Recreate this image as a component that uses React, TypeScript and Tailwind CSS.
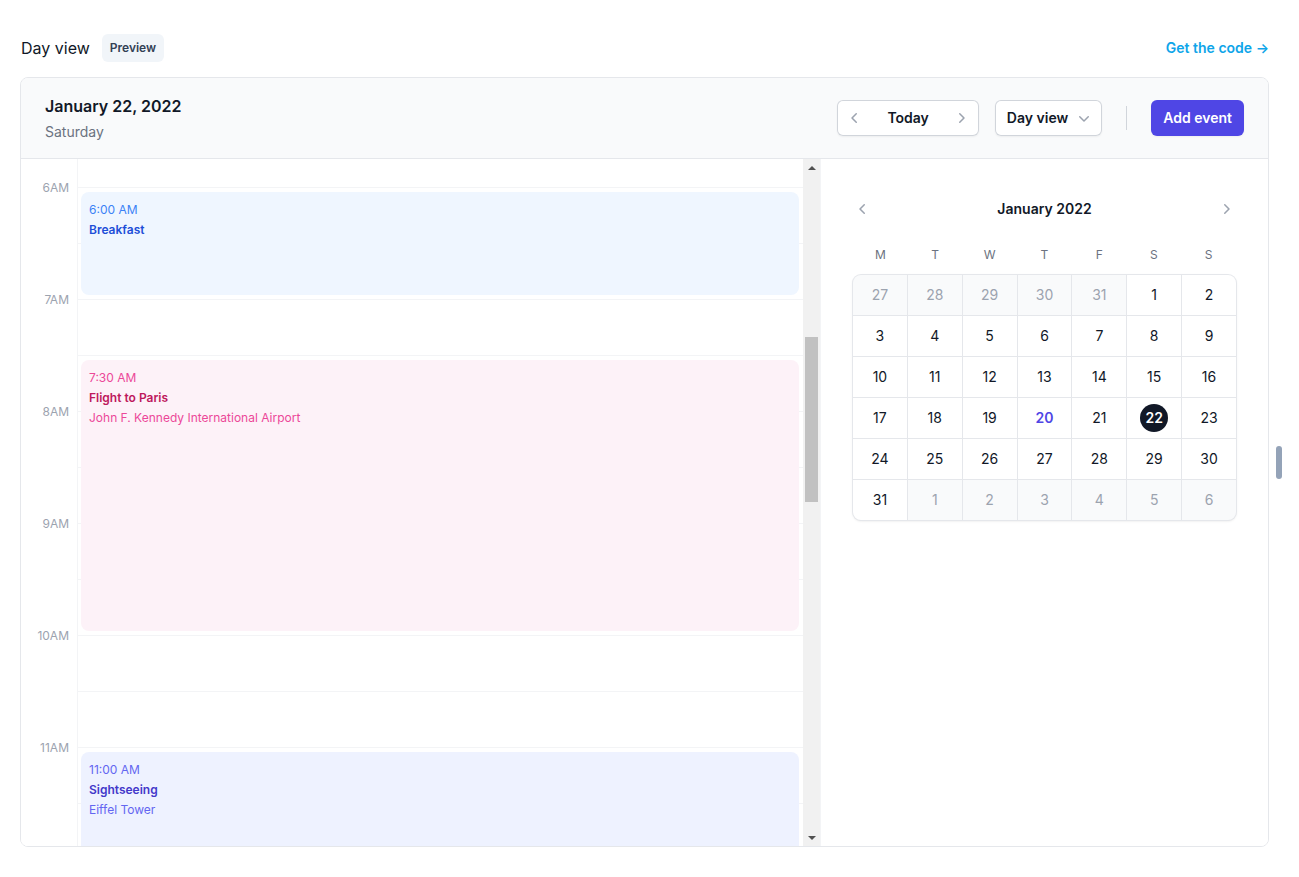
import { useLayoutEffect, useRef } from "react";

const ChevronLeft = ({ className }: { className?: string }) => (
  <svg viewBox="0 0 20 20" fill="currentColor" aria-hidden="true" className={className}>
    <path
      fillRule="evenodd"
      clipRule="evenodd"
      d="M11.78 5.22a.75.75 0 0 1 0 1.06L8.06 10l3.72 3.72a.75.75 0 1 1-1.06 1.06l-4.25-4.25a.75.75 0 0 1 0-1.06l4.25-4.25a.75.75 0 0 1 1.06 0Z"
    />
  </svg>
);

const ChevronRight = ({ className }: { className?: string }) => (
  <svg viewBox="0 0 20 20" fill="currentColor" aria-hidden="true" className={className}>
    <path
      fillRule="evenodd"
      clipRule="evenodd"
      d="M8.22 5.22a.75.75 0 0 1 1.06 0l4.25 4.25a.75.75 0 0 1 0 1.06l-4.25 4.25a.75.75 0 0 1-1.06-1.06L11.94 10 8.22 6.28a.75.75 0 0 1 0-1.06Z"
    />
  </svg>
);

const ChevronDown = ({ className }: { className?: string }) => (
  <svg viewBox="0 0 20 20" fill="currentColor" aria-hidden="true" className={className}>
    <path
      fillRule="evenodd"
      clipRule="evenodd"
      d="M5.22 8.22a.75.75 0 0 1 1.06 0L10 11.94l3.72-3.72a.75.75 0 1 1 1.06 1.06l-4.25 4.25a.75.75 0 0 1-1.06 0L5.22 9.28a.75.75 0 0 1 0-1.06Z"
    />
  </svg>
);

const hours = [
  "12AM", "1AM", "2AM", "3AM", "4AM", "5AM", "6AM", "7AM", "8AM", "9AM", "10AM", "11AM",
  "12PM", "1PM", "2PM", "3PM", "4PM", "5PM", "6PM", "7PM", "8PM", "9PM", "10PM", "11PM",
];

const events = [
  {
    name: "Breakfast",
    time: "6:00 AM",
    place: "",
    row: "row-[74/span_12]",
    box: "bg-[#eff6ff]",
    title: "text-[#1d4ed8]",
    sub: "text-[#3b82f6]",
  },
  {
    name: "Flight to Paris",
    time: "7:30 AM",
    place: "John F. Kennedy International Airport",
    row: "row-[92/span_30]",
    box: "bg-[#fdf2f8]",
    title: "text-[#be185d]",
    sub: "text-[#ec4899]",
  },
  {
    name: "Sightseeing",
    time: "11:00 AM",
    place: "Eiffel Tower",
    row: "row-[134/span_18]",
    box: "bg-[#eef2ff]",
    title: "text-[#4338ca]",
    sub: "text-[#6366f1]",
  },
];

type Day = { n: number; current?: boolean; today?: boolean; selected?: boolean };

const days: Day[] = [
  ...[27, 28, 29, 30, 31].map((n) => ({ n })),
  ...Array.from({ length: 31 }, (_, i) => ({
    n: i + 1,
    current: true,
    today: i + 1 === 20,
    selected: i + 1 === 22,
  })),
  ...[1, 2, 3, 4, 5, 6].map((n) => ({ n })),
];

function MiniCalendar() {
  return (
    <div>
      <div className="flex items-center text-center text-[#111827]">
        <button type="button" className="-m-1.5 flex flex-none items-center justify-center p-1.5 text-[#9ca3af]">
          <ChevronLeft className="size-5" />
        </button>
        <div className="flex-auto text-sm font-semibold">January 2022</div>
        <button type="button" className="-m-1.5 flex flex-none items-center justify-center p-1.5 text-[#9ca3af]">
          <ChevronRight className="size-5" />
        </button>
      </div>
      <div className="mt-6 grid grid-cols-7 text-center text-xs leading-6 text-[#6b7280]">
        <div>M</div>
        <div>T</div>
        <div>W</div>
        <div>T</div>
        <div>F</div>
        <div>S</div>
        <div>S</div>
      </div>
      <div className="isolate mt-2 grid grid-cols-7 gap-px rounded-lg bg-[#e5e7eb] text-sm shadow-sm ring-1 ring-[#e5e7eb]">
        {days.map((day, i) => (
          <button
            key={i}
            type="button"
            className={[
              "py-1.5",
              day.current ? "bg-white" : "bg-[#f9fafb]",
              day.selected || day.today ? "font-semibold" : "",
              day.selected ? "text-white" : "",
              !day.selected && day.today ? "text-[#4f46e5]" : "",
              !day.selected && !day.today && day.current ? "text-[#111827]" : "",
              !day.selected && !day.today && !day.current ? "text-[#9ca3af]" : "",
              i === 0 ? "rounded-tl-lg" : "",
              i === 6 ? "rounded-tr-lg" : "",
              i === days.length - 7 ? "rounded-bl-lg" : "",
              i === days.length - 1 ? "rounded-br-lg" : "",
            ].join(" ")}
          >
            <span
              className={
                "mx-auto flex size-7 items-center justify-center rounded-full " +
                (day.selected ? "bg-[#111827]" : "")
              }
            >
              {day.n}
            </span>
          </button>
        ))}
      </div>
    </div>
  );
}

// grey scrollbar of the preview frame, drawn since the page hides native ones
function ScrollTrack() {
  return (
    <div className="flex w-[17px] flex-none flex-col bg-[#f1f1f1]">
      <div className="flex h-[17px] items-center justify-center">
        <svg width="8" height="4" viewBox="0 0 8 4" className="text-[#505050]">
          <polygon points="0,4 4,0 8,4" fill="currentColor" />
        </svg>
      </div>
      <div className="mx-[2px] mt-[161px] h-[165px] bg-[#c1c1c1]" />
      <div className="mt-auto flex h-[17px] items-center justify-center">
        <svg width="8" height="4" viewBox="0 0 8 4" className="text-[#505050]">
          <polygon points="0,0 8,0 4,4" fill="currentColor" />
        </svg>
      </div>
    </div>
  );
}

export default function App() {
  const container = useRef<HTMLDivElement>(null);

  // start the day at 6AM, like the preview does
  useLayoutEffect(() => {
    if (container.current) container.current.scrollTop = 672;
  }, []);

  return (
    <div className="min-h-screen bg-white pl-5 pt-[34px] font-['Inter',sans-serif]">
      <div className="flex w-[1249px] items-center justify-between">
        <div className="flex items-center gap-3">
          <h2 className="pl-px text-base text-[#111827]">Day view</h2>
          <span className="flex h-7 items-center rounded-md bg-[#f1f5f9] px-2 text-xs font-semibold text-[#334155]">
            Preview
          </span>
        </div>
        <a href="#" className="text-sm font-semibold text-[#0ea5e9]">
          Get the code <span aria-hidden="true">→</span>
        </a>
      </div>

      <div className="mt-[15px] flex">
        <div className="flex h-[770px] w-[1249px] flex-none flex-col overflow-hidden rounded-lg border border-[#e5e7eb]">
          {/* Header */}
          <header className="flex flex-none items-center justify-between border-b border-[#e5e7eb] bg-[#f9fafb] px-6 py-4">
            <div>
              <h1 className="text-base font-semibold text-[#111827]">January 22, 2022</h1>
              <p className="mt-1 text-sm text-[#6b7280]">Saturday</p>
            </div>
            <div className="flex items-center">
              <div className="flex h-9 items-stretch rounded-md bg-white shadow-xs ring-1 ring-[#d1d5db] ring-inset">
                <button type="button" className="flex w-9 items-center justify-center text-[#9ca3af]">
                  <ChevronLeft className="size-5" />
                </button>
                <button type="button" className="px-3.5 text-sm font-semibold text-[#111827]">
                  Today
                </button>
                <button type="button" className="flex w-9 items-center justify-center text-[#9ca3af]">
                  <ChevronRight className="size-5" />
                </button>
              </div>
              <button
                type="button"
                className="ml-4 flex items-center gap-x-1.5 rounded-md bg-white px-3 py-2 text-sm font-semibold text-[#111827] shadow-xs ring-1 ring-[#d1d5db] ring-inset"
              >
                Day view
                <ChevronDown className="-mr-1 size-5 text-[#9ca3af]" />
              </button>
              <div className="ml-6 h-6 w-px bg-[#d1d5db]" />
              <button
                type="button"
                className="ml-6 rounded-md bg-[#4f46e5] px-3 py-2 text-sm font-semibold text-white shadow-xs"
              >
                Add event
              </button>
            </div>
          </header>

          {/* Body */}
          <div className="isolate flex min-h-0 flex-auto overflow-hidden bg-white">
            <div
              ref={container}
              className="flex flex-auto flex-col overflow-y-auto [scrollbar-width:none] [&::-webkit-scrollbar]:hidden"
            >
              <div className="flex w-full flex-auto">
                <div className="w-14 flex-none bg-white ring-1 ring-[#f3f4f6]" />
                <div className="grid flex-auto grid-cols-1 grid-rows-1">
                  {/* Horizontal lines */}
                  <div className="col-start-1 col-end-2 row-start-1 grid grid-rows-[repeat(48,minmax(3.5rem,1fr))]">
                    <div className="row-end-1 h-7" />
                    {hours.map((h) => (
                      <div key={h} className="contents">
                        <div className="border-t border-[#f3f4f6]">
                          <div className="-mt-2.5 -ml-14 w-14 pr-2 text-right text-xs leading-5 text-[#9ca3af]">
                            {h}
                          </div>
                        </div>
                        <div className="border-t border-[#f3f4f6]" />
                      </div>
                    ))}
                  </div>

                  {/* Events */}
                  <ol className="col-start-1 col-end-2 row-start-1 grid grid-cols-1 grid-rows-[1.75rem_repeat(288,minmax(0,1fr))_auto]">
                    {events.map((ev) => (
                      <li key={ev.name} className={"relative mt-px flex " + ev.row}>
                        <a
                          href="#"
                          className={
                            "absolute inset-1 flex flex-col overflow-y-auto rounded-lg p-2 text-xs leading-5 " + ev.box
                          }
                        >
                          <p className={ev.sub}>
                            <time>{ev.time}</time>
                          </p>
                          <p className={"font-semibold " + ev.title}>{ev.name}</p>
                          {ev.place && <p className={ev.sub}>{ev.place}</p>}
                        </a>
                      </li>
                    ))}
                  </ol>
                </div>
              </div>
            </div>
            <ScrollTrack />

            <div className="w-[448px] flex-none border-l border-[#f3f4f6] px-8 py-10">
              <MiniCalendar />
            </div>
          </div>
        </div>

        {/* resize handle of the preview */}
        <div className="flex flex-1 items-center pl-[7px]">
          <div className="h-[33px] w-1.5 rounded-full bg-[#94a3b8]" />
        </div>
      </div>
    </div>
  );
}
